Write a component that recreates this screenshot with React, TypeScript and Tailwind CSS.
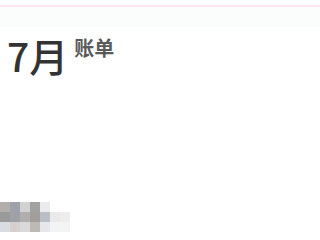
const mosaic: string[][] = [
  ["bg-[#b3adab]", "bg-[#9da2aa]", "bg-[#d2d2d2]", "bg-[#a2a2a0]", "bg-[#e9ebef]", "bg-white", "bg-white"],
  ["bg-[#9a9a9a]", "bg-[#9ea2a6]", "bg-[#b2aeae]", "bg-[#a29e9a]", "bg-[#babec6]", "bg-[#e9e9e9]", "bg-[#ededed]"],
  ["bg-[#d9dde1]", "bg-[#d5d1d1]", "bg-[#d9d9d9]", "bg-[#bdb9b5]", "bg-[#e5e7eb]", "bg-[#f1f3f5]", "bg-[#f3f5f5]"],
];

export default function App() {
  return (
    <div className="w-[320px] h-[240px] bg-white overflow-hidden flex flex-col" style={{ fontFamily: '"Noto Sans CJK SC", sans-serif' }}>
      <div className="h-[5px] bg-white" />
      <div className="h-[2px] bg-[#fde6ee]" />
      <div className="h-[20px] bg-[#fbfcfc]" />
      <div className="flex items-start pl-[7px] pt-[6px] h-[48px]">
        <span className="text-[39px] leading-[44px] font-medium text-[#333]">7月</span>
        <span className="ml-[6px] mt-[4px] text-[20px] leading-[22px] font-bold text-[#5a5a5a]">账单</span>
      </div>
      <div className="mt-[127px] flex flex-col">
        {mosaic.map((row, i) => (
          <div key={i} className="flex">
            {row.map((c, j) => (
              <div key={j} className={`w-[10px] h-[10px] ${c}`} />
            ))}
          </div>
        ))}
      </div>
    </div>
  );
}
